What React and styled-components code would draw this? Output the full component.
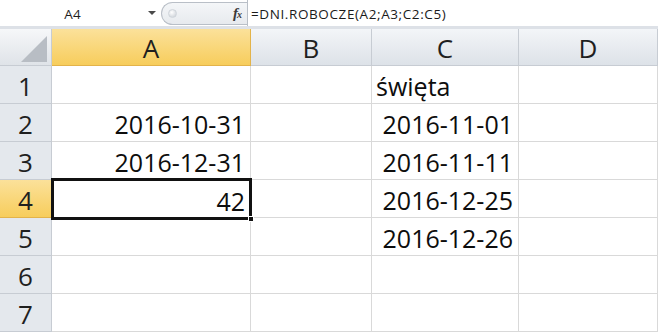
import React from "react";
import styled, { createGlobalStyle } from "styled-components";

const GlobalStyle = createGlobalStyle`
  *, *::before, *::after {
    box-sizing: border-box;
  }
  html, body {
    margin: 0;
    padding: 0;
    background: #ffffff;
    overflow: hidden;
  }
`;

const Window = styled.div`
  width: 658px;
  height: 336px;
  overflow: hidden;
  font-family: "Open Sans", "Liberation Sans", sans-serif;
  color: #1e1e1e;
`;

const FormulaBar = styled.div`
  display: flex;
  align-items: stretch;
  height: 29px;
  background: #ffffff;
  border-bottom: 3px solid #dde1e7;
  font-size: 13.5px;
`;

const NameBox = styled.div`
  width: 145px;
  display: flex;
  align-items: center;
  justify-content: center;
  padding-top: 1px;
`;

const DropArrow = styled.div`
  width: 14px;
  display: flex;
  align-items: center;
  justify-content: center;
  &::after {
    content: "";
    border-left: 4px solid transparent;
    border-right: 4px solid transparent;
    border-top: 4px solid #4a4a4a;
  }
`;

const Pill = styled.div`
  flex: 0 0 86px;
  margin: 2px 0 1px 2px;
  border: 1px solid #b9bfc7;
  border-right: none;
  border-radius: 12px 0 0 12px;
  background: linear-gradient(#f4f6f8, #e7eaee);
  display: flex;
  align-items: center;
  justify-content: space-between;
  padding: 0 6px 0 6px;
`;

const Knob = styled.span`
  width: 9px;
  height: 9px;
  border-radius: 50%;
  background: radial-gradient(circle at 40% 35%, #ffffff, #c6ccd3);
  border: 1px solid #d0d5db;
`;

const Fx = styled.span`
  font-family: "Liberation Serif", serif;
  font-style: italic;
  font-weight: bold;
  font-size: 15px;
  color: #3a3a3a;
  letter-spacing: -1px;
  small {
    font-size: 10px;
  }
`;

const Formula = styled.div`
  flex: 1;
  border-left: 1px solid #b9bfc7;
  display: flex;
  align-items: center;
  padding: 1px 0 0 3px;
  letter-spacing: 0.6px;
  color: #1a1a1a;
`;

const Grid = styled.div`
  display: grid;
  grid-template-columns: 52px 199px 121px 147px 139px;
  grid-template-rows: 37px repeat(7, 38px);
`;

const Corner = styled.div`
  background: linear-gradient(#f6f7f9, #dfe3e8);
  border-right: 1px solid #c7ccd3;
  border-bottom: 1px solid #c7ccd3;
  position: relative;
  &::after {
    content: "";
    position: absolute;
    right: 4px;
    bottom: 3px;
    border-left: 26px solid transparent;
    border-bottom: 26px solid #b8bdc4;
  }
`;

const ColHead = styled.div`
  display: flex;
  align-items: center;
  justify-content: center;
  font-size: 26px;
  padding-top: 2px;
  color: #1f1f1f;
  background: ${p =>
    p.active
      ? "linear-gradient(#fbe19a, #f7cd5c)"
      : "linear-gradient(#f3f5f8, #dde2e8)"};
  border-right: 1px solid ${p => (p.active ? "#e3b34a" : "#c7ccd3")};
  border-bottom: 1px solid ${p => (p.active ? "#e3b34a" : "#c7ccd3")};
`;

const RowHead = styled.div`
  display: flex;
  align-items: center;
  justify-content: center;
  font-size: 26px;
  padding-top: 2px;
  color: #1f1f1f;
  background: ${p =>
    p.active ? "linear-gradient(#fbe19a, #f7cd5c)" : "#e4e8ed"};
  border-right: 1px solid ${p => (p.active ? "#e3b34a" : "#c7ccd3")};
  border-bottom: 1px solid ${p => (p.active ? "#e3b34a" : "#c7ccd3")};
`;

const Cell = styled.div`
  display: flex;
  align-items: center;
  justify-content: ${p => (p.left ? "flex-start" : "flex-end")};
  padding: 3px ${p => (p.left ? "0" : "5px")} 0 ${p => (p.left ? "4px" : "0")};
  font-size: 25px;
  color: #0d0d0d;
  background: #ffffff;
  border-right: 1px solid #d9d9d9;
  border-bottom: 1px solid #d9d9d9;
  position: relative;
  ${p =>
    p.selected &&
    `
    border: 3px solid #111;
    margin: -2px -1px -2px -1px;
    padding-right: 4px;
    z-index: 2;
    &::after {
      content: "";
      position: absolute;
      right: -5px;
      bottom: -5px;
      width: 6px;
      height: 6px;
      background: #111;
      border: 1px solid #fff;
    }
  `}
`;

const columns = ["A", "B", "C", "D"];

const data = {
  1: { C: { text: "święta", left: true } },
  2: { A: { text: "2016-10-31" }, C: { text: "2016-11-01" } },
  3: { A: { text: "2016-12-31" }, C: { text: "2016-11-11" } },
  4: { A: { text: "42" }, C: { text: "2016-12-25" } },
  5: { C: { text: "2016-12-26" } },
  6: {},
  7: {},
};

export default function App() {
  return (
    <Window>
      <GlobalStyle />
      <FormulaBar>
        <NameBox>A4</NameBox>
        <DropArrow />
        <Pill>
          <Knob />
          <Fx>
            f<small>x</small>
          </Fx>
        </Pill>
        <Formula>=DNI.ROBOCZE(A2;A3;C2:C5)</Formula>
      </FormulaBar>
      <Grid>
        <Corner />
        {columns.map(c => (
          <ColHead key={c} active={c === "A"}>
            {c}
          </ColHead>
        ))}
        {[1, 2, 3, 4, 5, 6, 7].map(r => (
          <React.Fragment key={r}>
            <RowHead active={r === 4}>{r}</RowHead>
            {columns.map(c => {
              const v = data[r][c];
              return (
                <Cell
                  key={c}
                  left={v && v.left}
                  selected={r === 4 && c === "A"}
                >
                  {v ? v.text : ""}
                </Cell>
              );
            })}
          </React.Fragment>
        ))}
      </Grid>
    </Window>
  );
}
